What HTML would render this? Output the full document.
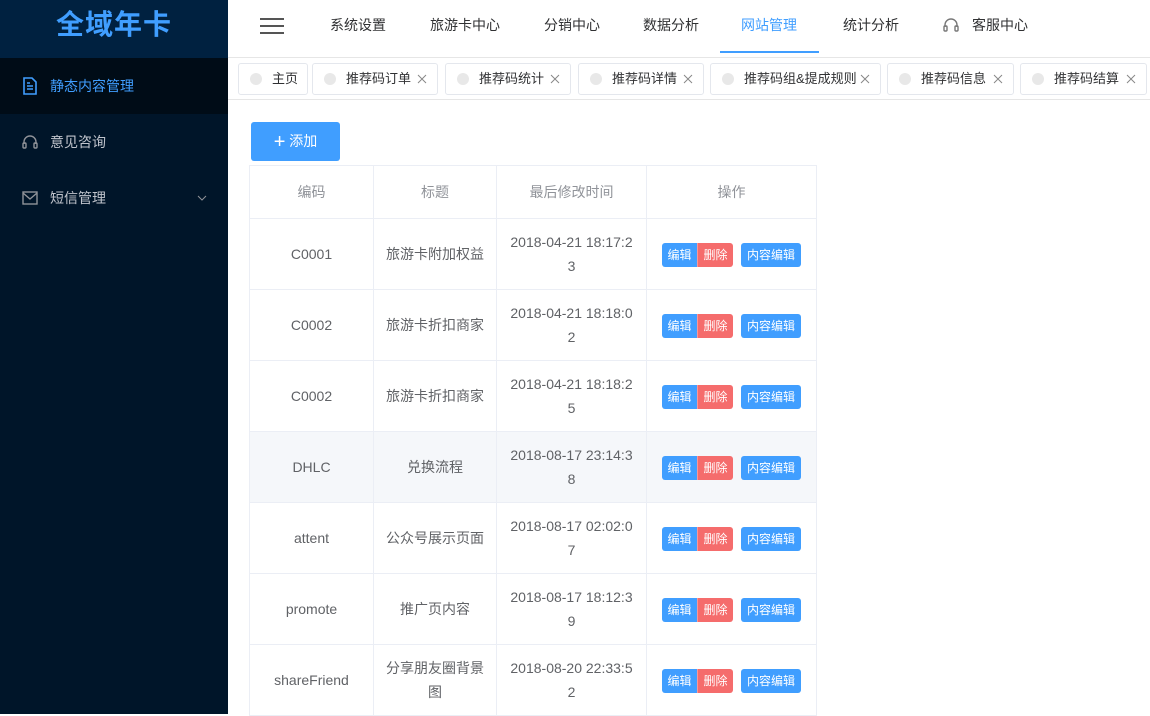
<!DOCTYPE html>
<html><head><meta charset="utf-8"><style>
*{margin:0;padding:0;box-sizing:border-box}
body{width:1150px;height:714px;overflow:hidden;background:#fff;font-family:"Liberation Sans","Noto Sans CJK SC",sans-serif;font-size:14px;color:#606266;position:relative}
.side{position:absolute;left:0;top:0;width:228px;height:714px;background:#001529}
.logo{height:58px;background:#002140;color:#409eff;font-size:28px;font-weight:bold;text-align:center;line-height:50px;letter-spacing:1px}
.mi{height:56px;display:flex;align-items:center;padding-left:22px;color:#c0c4cc;font-size:14px;position:relative}
.mi svg{margin-right:12px}
.mi.act{background:#000c17;color:#409eff}
.hdr{position:absolute;left:228px;top:0;right:0;height:58px;border-bottom:1px solid #e6e6e6}
.nav{position:absolute;top:0;height:55px;line-height:50px;color:#303133;font-size:14px;transform:translateX(-50%)}
.ul{position:absolute;left:720px;top:51px;width:99px;height:2px;background:#409eff}
.tabs{position:absolute;left:228px;top:58px;right:0;height:42px;border-bottom:1px solid #e6e6e6}
.tab{position:absolute;top:5px;height:32px;border:1px solid #e4e7ed;border-radius:3px;font-size:13px;color:#303133;line-height:30px}
.tab .d{position:absolute;left:11px;top:9px;width:12px;height:12px;border-radius:50%;background:#e8e8e8}
.tab .t{position:absolute;left:33px}
.tab .x{position:absolute;right:10px;top:10px;width:10px;height:10px}
.add{position:absolute;left:251px;top:122px;width:89px;height:39px;background:#409eff;border-radius:3px;color:#fff;font-size:14px;line-height:39px;text-align:center}
table{position:absolute;left:249px;top:165px;border-collapse:collapse;table-layout:fixed}
td,th{border:1px solid #ebeef5;text-align:center;font-weight:normal;line-height:24px}
th{height:53px;color:#909399}
td{height:71px}
tr.h td{background:#f5f7fa}
.b{display:inline-block;height:24px;line-height:24px;font-size:12px;color:#fff;vertical-align:middle}
.be{background:#409eff;width:35px;border-radius:3px 0 0 3px}
.bd{background:#f56c6c;width:36px;border-radius:0 3px 3px 0;border-left:1px solid #f89898}
.bc{background:#409eff;width:60px;border-radius:3px;margin-left:8px}
</style></head><body>
<div class="side">
<div class="logo">全域年卡</div>
<div class="mi act"><svg width="16" height="18" viewBox="0 0 16 18" fill="none" stroke="#409eff" stroke-width="1.6"><path d="M2 1h8l4 4v12H2z"/><path d="M5 9h6M5 12h6M5 6h3"/></svg>静态内容管理</div>
<div class="mi"><svg width="16" height="16" viewBox="0 0 16 16" fill="none" stroke="#909399" stroke-width="1.4"><path d="M2 10V8a6 6 0 0112 0v2"/><rect x="1" y="9" width="3" height="5" rx="1"/><rect x="12" y="9" width="3" height="5" rx="1"/></svg>意见咨询</div>
<div class="mi"><svg width="16" height="14" viewBox="0 0 16 14" fill="none" stroke="#909399" stroke-width="1.4"><rect x="1" y="1" width="14" height="12"/><path d="M1 2l7 6 7-6"/></svg>短信管理<svg style="position:absolute;left:197px;top:25px" width="10" height="6" viewBox="0 0 10 6" fill="none" stroke="#909399" stroke-width="1"><path d="M1 1l4 4 4-4"/></svg></div>
</div>
<div class="hdr"></div>
<svg style="position:absolute;left:260px;top:17px" width="24" height="18" viewBox="0 0 24 18"><path d="M0 2h24M0 9h24M0 16h24" stroke="#555" stroke-width="2"/></svg>
<div class="nav" style="left:358px">系统设置</div>
<div class="nav" style="left:465px">旅游卡中心</div>
<div class="nav" style="left:572px">分销中心</div>
<div class="nav" style="left:671px">数据分析</div>
<div class="nav" style="left:769px;color:#409eff">网站管理</div>
<div class="nav" style="left:871px">统计分析</div>
<svg style="position:absolute;left:943px;top:17px" width="16" height="16" viewBox="0 0 16 16" fill="none" stroke="#777" stroke-width="1.4"><path d="M2 10V8a6 6 0 0112 0v2"/><rect x="1" y="9" width="3" height="5" rx="1"/><rect x="12" y="9" width="3" height="5" rx="1"/></svg>
<div class="nav" style="left:1000px">客服中心</div>
<div class="ul"></div>
<div class="tabs"></div>
<div class="tab" style="left:238px;width:70px;top:63px"><span class="d"></span><span class="t">主页</span></div>
<div class="tab" style="left:312px;width:126px;top:63px"><span class="d"></span><span class="t">推荐码订单</span><svg class="x" viewBox="0 0 10 10"><path d="M1 1l8 8M9 1l-8 8" stroke="#888" stroke-width="1"/></svg></div>
<div class="tab" style="left:445px;width:126px;top:63px"><span class="d"></span><span class="t">推荐码统计</span><svg class="x" viewBox="0 0 10 10"><path d="M1 1l8 8M9 1l-8 8" stroke="#888" stroke-width="1"/></svg></div>
<div class="tab" style="left:578px;width:126px;top:63px"><span class="d"></span><span class="t">推荐码详情</span><svg class="x" viewBox="0 0 10 10"><path d="M1 1l8 8M9 1l-8 8" stroke="#888" stroke-width="1"/></svg></div>
<div class="tab" style="left:710px;width:171px;top:63px"><span class="d"></span><span class="t">推荐码组&amp;提成规则</span><svg class="x" viewBox="0 0 10 10"><path d="M1 1l8 8M9 1l-8 8" stroke="#888" stroke-width="1"/></svg></div>
<div class="tab" style="left:887px;width:127px;top:63px"><span class="d"></span><span class="t">推荐码信息</span><svg class="x" viewBox="0 0 10 10"><path d="M1 1l8 8M9 1l-8 8" stroke="#888" stroke-width="1"/></svg></div>
<div class="tab" style="left:1020px;width:127px;top:63px"><span class="d"></span><span class="t">推荐码结算</span><svg class="x" viewBox="0 0 10 10"><path d="M1 1l8 8M9 1l-8 8" stroke="#888" stroke-width="1"/></svg></div>
<div class="add"><span style="font-size:20px;vertical-align:-2px;font-weight:300">+</span> 添加</div>
<table>
<colgroup><col style="width:124px"><col style="width:123px"><col style="width:150px"><col style="width:170px"></colgroup>
<tr><th>编码</th><th>标题</th><th>最后修改时间</th><th>操作</th></tr>
<tr><td>C0001</td><td>旅游卡附加权益</td><td>2018-04-21 18:17:2<br>3</td><td><span class="b be">编辑</span><span class="b bd">删除</span><span class="b bc">内容编辑</span></td></tr>
<tr><td>C0002</td><td>旅游卡折扣商家</td><td>2018-04-21 18:18:0<br>2</td><td><span class="b be">编辑</span><span class="b bd">删除</span><span class="b bc">内容编辑</span></td></tr>
<tr><td>C0002</td><td>旅游卡折扣商家</td><td>2018-04-21 18:18:2<br>5</td><td><span class="b be">编辑</span><span class="b bd">删除</span><span class="b bc">内容编辑</span></td></tr>
<tr class="h"><td>DHLC</td><td>兑换流程</td><td>2018-08-17 23:14:3<br>8</td><td><span class="b be">编辑</span><span class="b bd">删除</span><span class="b bc">内容编辑</span></td></tr>
<tr><td>attent</td><td>公众号展示页面</td><td>2018-08-17 02:02:0<br>7</td><td><span class="b be">编辑</span><span class="b bd">删除</span><span class="b bc">内容编辑</span></td></tr>
<tr><td>promote</td><td>推广页内容</td><td>2018-08-17 18:12:3<br>9</td><td><span class="b be">编辑</span><span class="b bd">删除</span><span class="b bc">内容编辑</span></td></tr>
<tr><td>shareFriend</td><td>分享朋友圈背景<br>图</td><td>2018-08-20 22:33:5<br>2</td><td><span class="b be">编辑</span><span class="b bd">删除</span><span class="b bc">内容编辑</span></td></tr>
</table>
</body></html>
